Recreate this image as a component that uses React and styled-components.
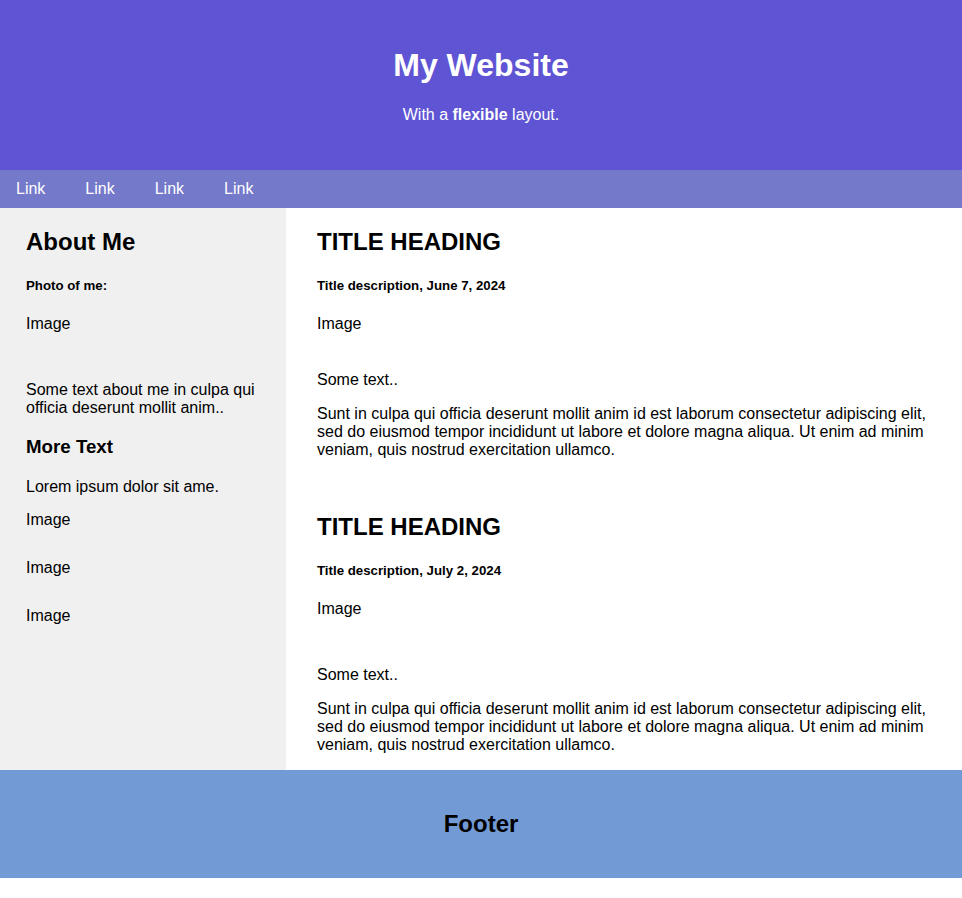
import React from "react";
import styled, { createGlobalStyle } from "styled-components";

const GlobalStyle = createGlobalStyle`
  * {
    box-sizing: border-box;
  }
  body {
    margin: 0;
    font-family: "Liberation Sans", Arial, sans-serif;
    background: #ffffff;
    color: #000000;
  }
`;

const Header = styled.header`
  padding: 26px 20px 46px;
  text-align: center;
  background: #5e54d4;
  color: #ffffff;
`;

const SiteTitle = styled.h1`
  margin: 21px 0 22px;
  font-size: 32px;
  line-height: 37px;
`;

const Tagline = styled.p`
  margin: 0;
  font-size: 16px;
  line-height: 18px;
`;

const Navbar = styled.nav`
  display: flex;
  gap: 8px;
  background: #7579c9;
`;

const NavLink = styled.a`
  padding: 10px 16px;
  color: #ffffff;
  font-size: 16px;
  line-height: 18px;
  text-decoration: none;
`;

const Row = styled.div`
  display: grid;
  grid-template-columns: 286px 1fr;
`;

const Side = styled.aside`
  background: #f0f0f0;
  padding: 0 26px;
`;

const Main = styled.main`
  padding: 0 31px;
`;

const Heading = styled.h2`
  margin: 20px 0;
  font-size: 24px;
  line-height: 28px;
`;

const SubHeading = styled.h3`
  margin: 19px 0 21px;
  font-size: 18.72px;
  line-height: 21px;
`;

const Caption = styled.h5`
  margin: 22px 0;
  font-size: 13.28px;
  line-height: 15px;
`;

const Text = styled.p`
  margin: 16px 0 ${({ $mb = 16 }) => $mb}px;
  font-size: 16px;
  line-height: 18px;
`;

const ImageBox = styled.div`
  height: ${({ $h }) => $h}px;
  font-size: 16px;
  line-height: 18px;
`;

const Spacer = styled.div`
  height: 18px;
`;

const Footer = styled.footer`
  padding: 20px;
  text-align: center;
  background: #729bd6;
`;

const FooterTitle = styled.h2`
  margin: 20px 0;
  font-size: 24px;
  line-height: 28px;
`;

const lorem =
  "Sunt in culpa qui officia deserunt mollit anim id est laborum consectetur adipiscing elit, sed do eiusmod tempor incididunt ut labore et dolore magna aliqua. Ut enim ad minim veniam, quis nostrud exercitation ullamco.";

const posts = [
  { date: "June 7, 2024", imageHeight: 40 },
  { date: "July 2, 2024", imageHeight: 50 }
];

export default function App() {
  return (
    <>
      <GlobalStyle />
      <Header>
        <SiteTitle>My Website</SiteTitle>
        <Tagline>
          With a <b>flexible</b> layout.
        </Tagline>
      </Header>

      <Navbar>
        {["Link", "Link", "Link", "Link"].map((label, i) => (
          <NavLink key={i} href="#">
            {label}
          </NavLink>
        ))}
      </Navbar>

      <Row>
        <Side>
          <Heading>About Me</Heading>
          <Caption>Photo of me:</Caption>
          <ImageBox $h={50}>Image</ImageBox>
          <Text>Some text about me in culpa qui officia deserunt mollit anim..</Text>
          <SubHeading>More Text</SubHeading>
          <Text $mb={15}>Lorem ipsum dolor sit ame.</Text>
          <ImageBox $h={48}>Image</ImageBox>
          <ImageBox $h={48}>Image</ImageBox>
          <ImageBox $h={30}>Image</ImageBox>
        </Side>

        <Main>
          {posts.map((post, i) => (
            <section key={i}>
              {i > 0 && <Spacer />}
              <Heading>TITLE HEADING</Heading>
              <Caption>Title description, {post.date}</Caption>
              <ImageBox $h={post.imageHeight}>Image</ImageBox>
              <Text>Some text..</Text>
              <Text>{lorem}</Text>
            </section>
          ))}
        </Main>
      </Row>

      <Footer>
        <FooterTitle>Footer</FooterTitle>
      </Footer>
    </>
  );
}
